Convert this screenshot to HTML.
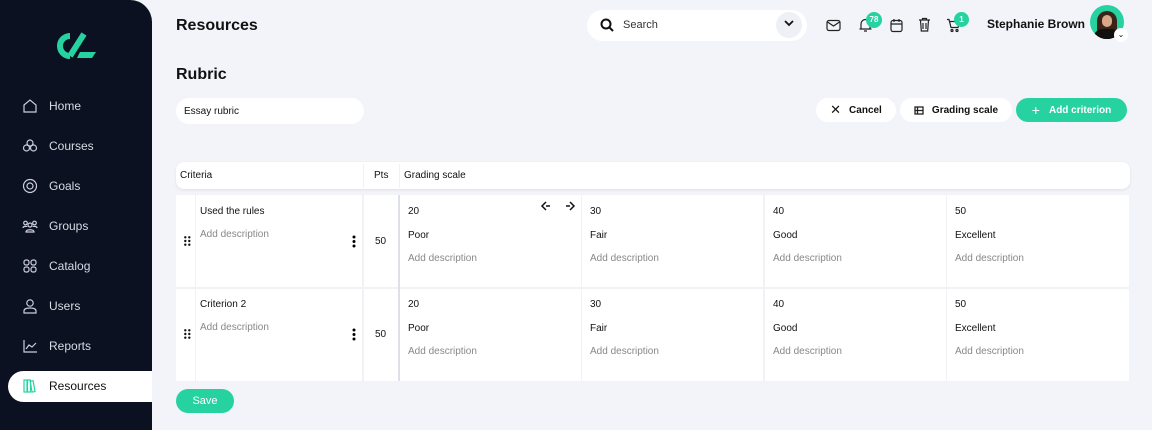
<!DOCTYPE html>
<html><head><style>
*{box-sizing:border-box;margin:0;padding:0}
body{width:1152px;height:430px;background:#f2f4f9;font-family:"Liberation Sans",sans-serif;position:relative;overflow:hidden;color:#111}
.side{position:absolute;left:0;top:0;width:152px;height:430px;background:#0b1120;border-top-right-radius:22px}
.nav{position:absolute;left:22px;font-size:12px;color:#d8dbe6;display:flex;align-items:center}
.nav svg{width:16px;height:16px;margin-right:11px}
.active{position:absolute;left:8px;top:371px;width:144px;height:31px;background:#fff;border-radius:16px 0 0 16px}
.abs{position:absolute}
.btn{position:absolute;height:24px;border-radius:12px;background:#fff;font-size:10px;font-weight:bold;display:flex;align-items:center;justify-content:center}
.t{position:absolute;font-size:10px;margin-top:1px}
.g{color:#888}
.cell{position:absolute;background:#fff}
</style></head><body>
<div class="side"></div>
<svg class="abs" style="left:56px;top:32px" width="40" height="28" viewBox="0 0 40 28"><path d="M14 4 A10 10 0 1 0 14 24" stroke="#26d3a0" stroke-width="6" fill="none"/><path d="M28 2 L14 24" stroke="#26d3a0" stroke-width="6"/><path d="M24 20 H40 L36 26 H21Z" fill="#26d3a0"/></svg>
<div class="nav" style="top:98px"><svg viewBox="0 0 16 16" fill="none" stroke="#ccd" stroke-width="1.2"><path d="M2 7 8 2l6 5v7H2z"/></svg>Home</div>
<div class="nav" style="top:138px"><svg viewBox="0 0 16 16" fill="none" stroke="#ccd" stroke-width="1.2"><circle cx="8" cy="5" r="3"/><circle cx="4.5" cy="10" r="3"/><circle cx="11.5" cy="10" r="3"/></svg>Courses</div>
<div class="nav" style="top:178px"><svg viewBox="0 0 16 16" fill="none" stroke="#ccd" stroke-width="1.2"><circle cx="8" cy="8" r="6.5"/><circle cx="8" cy="8" r="3"/></svg>Goals</div>
<div class="nav" style="top:218px"><svg viewBox="0 0 16 16" fill="none" stroke="#ccd" stroke-width="1.2"><circle cx="3.5" cy="5" r="1.8"/><circle cx="12.5" cy="5" r="1.8"/><circle cx="8" cy="7" r="2"/><path d="M4 14c0-3 8-3 8 0zM1 10c0-2 4-2 4-1M15 10c0-2-4-2-4-1"/></svg>Groups</div>
<div class="nav" style="top:258px"><svg viewBox="0 0 16 16" fill="none" stroke="#ccd" stroke-width="1.2"><rect x="2" y="2" width="5" height="5" rx="2"/><rect x="9" y="2" width="5" height="5" rx="2"/><rect x="2" y="9" width="5" height="5" rx="2"/><rect x="9" y="9" width="5" height="5" rx="2"/></svg>Catalog</div>
<div class="nav" style="top:298px"><svg viewBox="0 0 16 16" fill="none" stroke="#ccd" stroke-width="1.2"><circle cx="8" cy="5" r="3.2"/><path d="M2 15v-2c0-2 2-3 6-3s6 1 6 3v2z"/></svg>Users</div>
<div class="nav" style="top:338px"><svg viewBox="0 0 16 16" fill="none" stroke="#ccd" stroke-width="1.2"><path d="M2 2v12h13M4 11l3-4 3 2 4-4"/></svg>Reports</div>
<div class="active"></div>
<div class="nav" style="top:378px;color:#111"><svg viewBox="0 0 16 16" fill="none" stroke="#26d3a0" stroke-width="1.2"><rect x="2" y="2" width="3" height="12"/><rect x="5.5" y="2" width="3" height="12"/><rect x="9" y="3" width="3" height="11" transform="rotate(-10 10 8)"/></svg>Resources</div>

<div class="abs" style="left:176px;top:17px;font-size:16px;font-weight:bold">Resources</div>
<div class="abs" style="left:176px;top:66px;font-size:16px;font-weight:bold">Rubric</div>
<div class="abs" style="left:587px;top:10px;width:220px;height:31px;background:#fff;border-radius:16px"></div>
<svg class="abs" style="left:600px;top:18px" width="14" height="14" viewBox="0 0 14 14" fill="none" stroke="#111" stroke-width="2"><circle cx="6" cy="6" r="4.5"/><path d="M9.5 9.5 13 13"/></svg>
<div class="t" style="left:623px;top:18px;font-size:11px;color:#333">Search</div>
<div class="abs" style="left:776px;top:12px;width:26px;height:26px;border-radius:13px;background:#eef0f5"></div>
<svg class="abs" style="left:783px;top:18px" width="12" height="10" viewBox="0 0 12 10" fill="none" stroke="#111" stroke-width="1.8"><path d="M2 3l4 4 4-4"/></svg>
<svg class="abs" style="left:826px;top:19px" width="15" height="13" viewBox="0 0 15 13" fill="none" stroke="#222" stroke-width="1.2"><rect x="1" y="1.5" width="13" height="10" rx="2"/><path d="M1.5 3l6 4 6-4"/></svg>
<svg class="abs" style="left:858px;top:17px" width="15" height="16" viewBox="0 0 15 16" fill="none" stroke="#222" stroke-width="1.2"><path d="M3 12V7a4.5 4.5 0 0 1 9 0v5h1.5H1.5zM6 14h3"/></svg>
<div class="abs" style="left:866px;top:12px;width:16px;height:16px;border-radius:8px;background:#26d3a0;color:#fff;font-size:8px;font-weight:bold;text-align:center;line-height:16px">78</div>
<svg class="abs" style="left:890px;top:18px" width="13" height="15" viewBox="0 0 13 15" fill="none" stroke="#222" stroke-width="1.2"><rect x="1" y="2.5" width="11" height="11" rx="2"/><path d="M1 6h11M4 1v3M9 1v3"/></svg>
<svg class="abs" style="left:918px;top:17px" width="13" height="15" viewBox="0 0 13 15" fill="none" stroke="#222" stroke-width="1.2"><path d="M1 3h11M4.5 3V1.5h4V3M2.5 3l.8 11h6.4l.8-11M5 6v6M8 6v6"/></svg>
<svg class="abs" style="left:946px;top:18px" width="15" height="15" viewBox="0 0 15 15" fill="none" stroke="#222" stroke-width="1.2"><path d="M1 1.5h2l2 8h7l2-6H4"/><circle cx="6" cy="12.5" r="1"/><circle cx="11" cy="12.5" r="1"/></svg>
<div class="abs" style="left:954px;top:12px;width:15px;height:15px;border-radius:8px;background:#26d3a0;color:#fff;font-size:8px;font-weight:bold;text-align:center;line-height:15px">1</div>
<div class="abs" style="left:987px;top:17px;font-size:12px;font-weight:bold">Stephanie Brown</div>
<div class="abs" style="left:1090px;top:5px;width:34px;height:34px;border-radius:17px;background:#26d3a0;overflow:hidden"><div style="position:absolute;left:7px;top:6px;width:20px;height:30px;background:#3a2418;border-radius:10px 10px 2px 2px"></div><div style="position:absolute;left:12px;top:10px;width:10px;height:12px;background:#d9a78a;border-radius:5px"></div><div style="position:absolute;left:4px;top:24px;width:26px;height:14px;background:#111;border-radius:8px 8px 0 0"></div></div>
<div class="abs" style="left:1114px;top:28px;width:14px;height:14px;border-radius:7px;background:#fff;font-size:8px;text-align:center;line-height:13px">⌄</div>

<div class="abs" style="left:176px;top:98px;width:188px;height:26px;background:#fff;border-radius:13px;font-size:10px;padding:8px 8px">Essay rubric</div>
<div class="btn" style="left:816px;top:98px;width:80px"><span style="font-size:13px;font-weight:normal;margin-right:8px">✕</span>Cancel</div>
<div class="btn" style="left:900px;top:98px;width:112px"><svg width="10" height="9" style="margin-right:8px" viewBox="0 0 10 9" fill="none" stroke="#222" stroke-width="1.3"><rect x="1" y="1" width="8" height="7"/><path d="M1 4.5h8M3.5 1v7"/></svg>Grading scale</div>
<div class="btn" style="left:1016px;top:98px;width:111px;background:#26d3a0;color:#fff"><span style="font-size:14px;font-weight:normal;margin-right:9px">+</span>Add criterion</div>

<div class="abs" style="left:176px;top:162px;width:954px;height:27px;background:#fff;border-radius:8px;box-shadow:0 1px 3px rgba(0,0,0,.08)"></div>
<div class="abs" style="left:363px;top:164px;width:1px;height:24px;background:#f0f1f4"></div>
<div class="abs" style="left:399px;top:164px;width:1px;height:24px;background:#f0f1f4"></div>
<div class="t" style="left:180px;top:169px">Criteria</div>
<div class="t" style="left:374px;top:169px">Pts</div>
<div class="t" style="left:404px;top:169px">Grading scale</div>

<div class="abs" style="left:176px;top:195px;width:953px;height:186px;background:#f0f2f6"></div>
<div class="cell" style="left:176px;top:195px;width:19px;height:92px"></div>
<div class="cell" style="left:196px;top:195px;width:166px;height:92px"></div>
<div class="cell" style="left:364px;top:195px;width:34px;height:92px"></div>
<div class="cell" style="left:400px;top:195px;width:181px;height:92px"></div>
<div class="cell" style="left:582px;top:195px;width:181px;height:92px"></div>
<div class="cell" style="left:765px;top:195px;width:181px;height:92px"></div>
<div class="cell" style="left:947px;top:195px;width:182px;height:92px"></div>
<div class="cell" style="left:176px;top:289px;width:19px;height:92px"></div>
<div class="cell" style="left:196px;top:289px;width:166px;height:92px"></div>
<div class="cell" style="left:364px;top:289px;width:34px;height:92px"></div>
<div class="cell" style="left:400px;top:289px;width:181px;height:92px"></div>
<div class="cell" style="left:582px;top:289px;width:181px;height:92px"></div>
<div class="cell" style="left:765px;top:289px;width:181px;height:92px"></div>
<div class="cell" style="left:947px;top:289px;width:182px;height:92px"></div>
<div class="abs" style="left:398px;top:195px;width:2px;height:186px;background:#dde0e6"></div>

<div class="t" style="left:200px;top:205px">Used the rules</div>
<div class="t g" style="left:200px;top:228px">Add description</div>
<div class="t" style="left:200px;top:298px">Criterion 2</div>
<div class="t g" style="left:200px;top:321px">Add description</div>
<svg class="abs" style="left:184px;top:236px" width="7" height="10"><g fill="#111"><circle cx="1.3" cy="1.3" r="1.2"/><circle cx="5.3" cy="1.3" r="1.2"/><circle cx="1.3" cy="5" r="1.2"/><circle cx="5.3" cy="5" r="1.2"/><circle cx="1.3" cy="8.7" r="1.2"/><circle cx="5.3" cy="8.7" r="1.2"/></g></svg>
<svg class="abs" style="left:184px;top:329px" width="7" height="10"><g fill="#111"><circle cx="1.3" cy="1.3" r="1.2"/><circle cx="5.3" cy="1.3" r="1.2"/><circle cx="1.3" cy="5" r="1.2"/><circle cx="5.3" cy="5" r="1.2"/><circle cx="1.3" cy="8.7" r="1.2"/><circle cx="5.3" cy="8.7" r="1.2"/></g></svg>
<svg class="abs" style="left:352px;top:235px" width="4" height="13"><circle cx="2" cy="2" r="1.5"/><circle cx="2" cy="6.5" r="1.5"/><circle cx="2" cy="11" r="1.5"/></svg>
<svg class="abs" style="left:352px;top:328px" width="4" height="13"><circle cx="2" cy="2" r="1.5"/><circle cx="2" cy="6.5" r="1.5"/><circle cx="2" cy="11" r="1.5"/></svg>
<div class="t" style="left:375px;top:235px">50</div>
<div class="t" style="left:375px;top:328px">50</div>
<svg class="abs" style="left:540px;top:200px" width="36" height="12" viewBox="0 0 36 12" fill="none" stroke="#111" stroke-width="1.5"><path d="M6 2 2 6l4 4M6 6h4M30 2l4 4-4 4M26 6h4"/></svg>

<div class="t" style="left:408px;top:205px">20</div><div class="t" style="left:408px;top:229px">Poor</div><div class="t g" style="left:408px;top:252px">Add description</div>
<div class="t" style="left:590px;top:205px">30</div><div class="t" style="left:590px;top:229px">Fair</div><div class="t g" style="left:590px;top:252px">Add description</div>
<div class="t" style="left:773px;top:205px">40</div><div class="t" style="left:773px;top:229px">Good</div><div class="t g" style="left:773px;top:252px">Add description</div>
<div class="t" style="left:955px;top:205px">50</div><div class="t" style="left:955px;top:229px">Excellent</div><div class="t g" style="left:955px;top:252px">Add description</div>

<div class="t" style="left:408px;top:298px">20</div><div class="t" style="left:408px;top:322px">Poor</div><div class="t g" style="left:408px;top:345px">Add description</div>
<div class="t" style="left:590px;top:298px">30</div><div class="t" style="left:590px;top:322px">Fair</div><div class="t g" style="left:590px;top:345px">Add description</div>
<div class="t" style="left:773px;top:298px">40</div><div class="t" style="left:773px;top:322px">Good</div><div class="t g" style="left:773px;top:345px">Add description</div>
<div class="t" style="left:955px;top:298px">50</div><div class="t" style="left:955px;top:322px">Excellent</div><div class="t g" style="left:955px;top:345px">Add description</div>

<div class="btn" style="left:176px;top:389px;width:58px;height:24px;background:#26d3a0;color:#fff;font-weight:normal;font-size:11px">Save</div>
</body></html>
